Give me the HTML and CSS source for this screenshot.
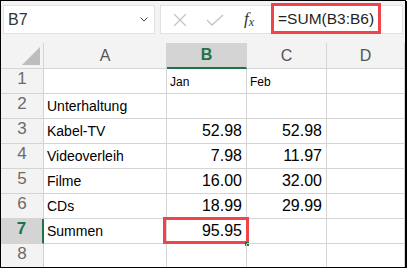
FILE: index.html
```html
<!DOCTYPE html>
<html lang="de">
<head>
  <meta charset="UTF-8">
  <title>Summen</title>
  <link rel="stylesheet" href="styles.css">
</head>
<body>
  <div class="frame">
    <div class="toolbar">
      <div class="name-box">
        <span>B7</span>
        <svg class="chevron" width="8" height="5" viewBox="0 0 8 5"><path d="M0.5 0.5 L4 4 L7.5 0.5" fill="none" stroke="#444" stroke-width="1"/></svg>
      </div>
      <div class="formula-box">
        <svg class="icon-x" width="14" height="14" viewBox="0 0 14 14"><path d="M1 1 L13 13 M13 1 L1 13" stroke="#c4c4c4" stroke-width="1.3"/></svg>
        <svg class="icon-check" width="18" height="12" viewBox="0 0 18 12"><path d="M1 6 L6 11 L17 1" fill="none" stroke="#c4c4c4" stroke-width="1.3"/></svg>
        <span class="fx">f<sub>x</sub></span>
        <div class="formula">=SUM(B3:B6)</div>
      </div>
    </div>

    <div class="sheet">
      <div class="hd corner"><span class="tri"></span></div>
      <div class="hd col">A</div>
      <div class="hd col active-col">B</div>
      <div class="hd col">C</div>
      <div class="hd col">D</div>

      <div class="hd row">1</div>
      <div class="cell"></div>
      <div class="cell small">Jan</div>
      <div class="cell small">Feb</div>
      <div class="cell"></div>

      <div class="hd row">2</div>
      <div class="cell">Unterhaltung</div>
      <div class="cell"></div>
      <div class="cell"></div>
      <div class="cell"></div>

      <div class="hd row">3</div>
      <div class="cell">Kabel-TV</div>
      <div class="cell num">52.98</div>
      <div class="cell num">52.98</div>
      <div class="cell"></div>

      <div class="hd row">4</div>
      <div class="cell">Videoverleih</div>
      <div class="cell num">7.98</div>
      <div class="cell num">11.97</div>
      <div class="cell"></div>

      <div class="hd row">5</div>
      <div class="cell">Filme</div>
      <div class="cell num">16.00</div>
      <div class="cell num">32.00</div>
      <div class="cell"></div>

      <div class="hd row">6</div>
      <div class="cell">CDs</div>
      <div class="cell num">18.99</div>
      <div class="cell num">29.99</div>
      <div class="cell"></div>

      <div class="hd row active-row">7</div>
      <div class="cell">Summen</div>
      <div class="cell num selected">95.95<span class="handle"></span></div>
      <div class="cell"></div>
      <div class="cell"></div>

      <div class="hd row">8</div>
      <div class="cell"></div>
      <div class="cell"></div>
      <div class="cell"></div>
      <div class="cell"></div>
    </div>
  </div>
</body>
</html>
```

FILE: styles.css
```css
body {
  margin: 0;
  background: #fff;
  font-family: "Liberation Sans", Arial, sans-serif;
}

.frame {
  width: 406px;
  height: 268px;
  box-sizing: border-box;
  border: 1px solid #000;
  box-shadow: 1px 1px 0 #000;
  overflow: hidden;
  background: #fff;
}

.toolbar {
  height: 42px;
  box-sizing: border-box;
  padding: 4px 0 0 2px;
  display: flex;
  gap: 5px;
  background: #f3f3f3;
}

.name-box {
  width: 152px;
  height: 29px;
  box-sizing: border-box;
  border: 1px solid #e1e1e1;
  background: #fff;
  display: flex;
  align-items: center;
  justify-content: space-between;
  padding: 0 6px 0 4px;
  font-size: 16px;
  color: #333;
}

.formula-box {
  width: 243px;
  height: 29px;
  box-sizing: border-box;
  border: 1px solid #e1e1e1;
  background: #fff;
  display: flex;
  align-items: center;
}

.icon-x {
  margin-left: 12px;
}

.icon-check {
  margin-left: 19px;
}

.fx {
  margin-left: 20px;
  font-family: "Liberation Serif", serif;
  font-style: italic;
  font-size: 17px;
  color: #333;
}

.fx sub {
  font-size: 12px;
  vertical-align: -2px;
}

.formula {
  margin-left: 17px;
  height: 31px;
  margin-top: -2px;
  box-sizing: border-box;
  border: 3px solid #ef4448;
  padding: 0 4px 0 4px;
  display: flex;
  align-items: center;
  font-size: 15.5px;
  color: #1f1f1f;
}

.sheet {
  display: grid;
  grid-template-columns: 43px 123px 80px 80px 1fr;
  grid-template-rows: 26px repeat(8, 25px);
}

.hd {
  background: #f3f3f3;
  box-sizing: border-box;
  border-right: 1px solid #d4d4d4;
  border-bottom: 1px solid #d4d4d4;
  color: #555;
}

.corner {
  position: relative;
}

.tri {
  position: absolute;
  right: 3px;
  bottom: 3px;
  width: 0;
  height: 0;
  border-left: 18px solid transparent;
  border-bottom: 18px solid #bdbdbd;
}

.col {
  display: flex;
  align-items: flex-end;
  justify-content: center;
  padding-bottom: 3px;
  font-size: 16px;
}

.active-col {
  background: #d4d4d4;
  border-bottom: 2px solid #217346;
  color: #217346;
  font-weight: bold;
}

.row {
  display: flex;
  align-items: flex-end;
  justify-content: center;
  padding-bottom: 4px;
  font-size: 17px;
  color: #6b6b6b;
}

.active-row {
  background: #d4d4d4;
  border-right: 2px solid #217346;
  color: #217346;
  font-weight: bold;
}

.cell {
  position: relative;
  box-sizing: border-box;
  border-right: 1px solid #d4d4d4;
  border-bottom: 1px solid #d4d4d4;
  display: flex;
  align-items: flex-end;
  padding: 0 4px 4px 3px;
  font-size: 14px;
  color: #000;
  white-space: nowrap;
}

.small {
  font-size: 12px;
  padding-bottom: 4px;
}

.num {
  justify-content: flex-end;
  font-size: 16px;
  padding-bottom: 3px;
}

.selected::before {
  content: "";
  position: absolute;
  left: -4px;
  top: -2px;
  right: -3px;
  bottom: -1px;
  border: 3px solid #ef4448;
}

.handle {
  position: absolute;
  right: -3px;
  bottom: -3px;
  width: 4px;
  height: 4px;
  background: #217346;
}
```
